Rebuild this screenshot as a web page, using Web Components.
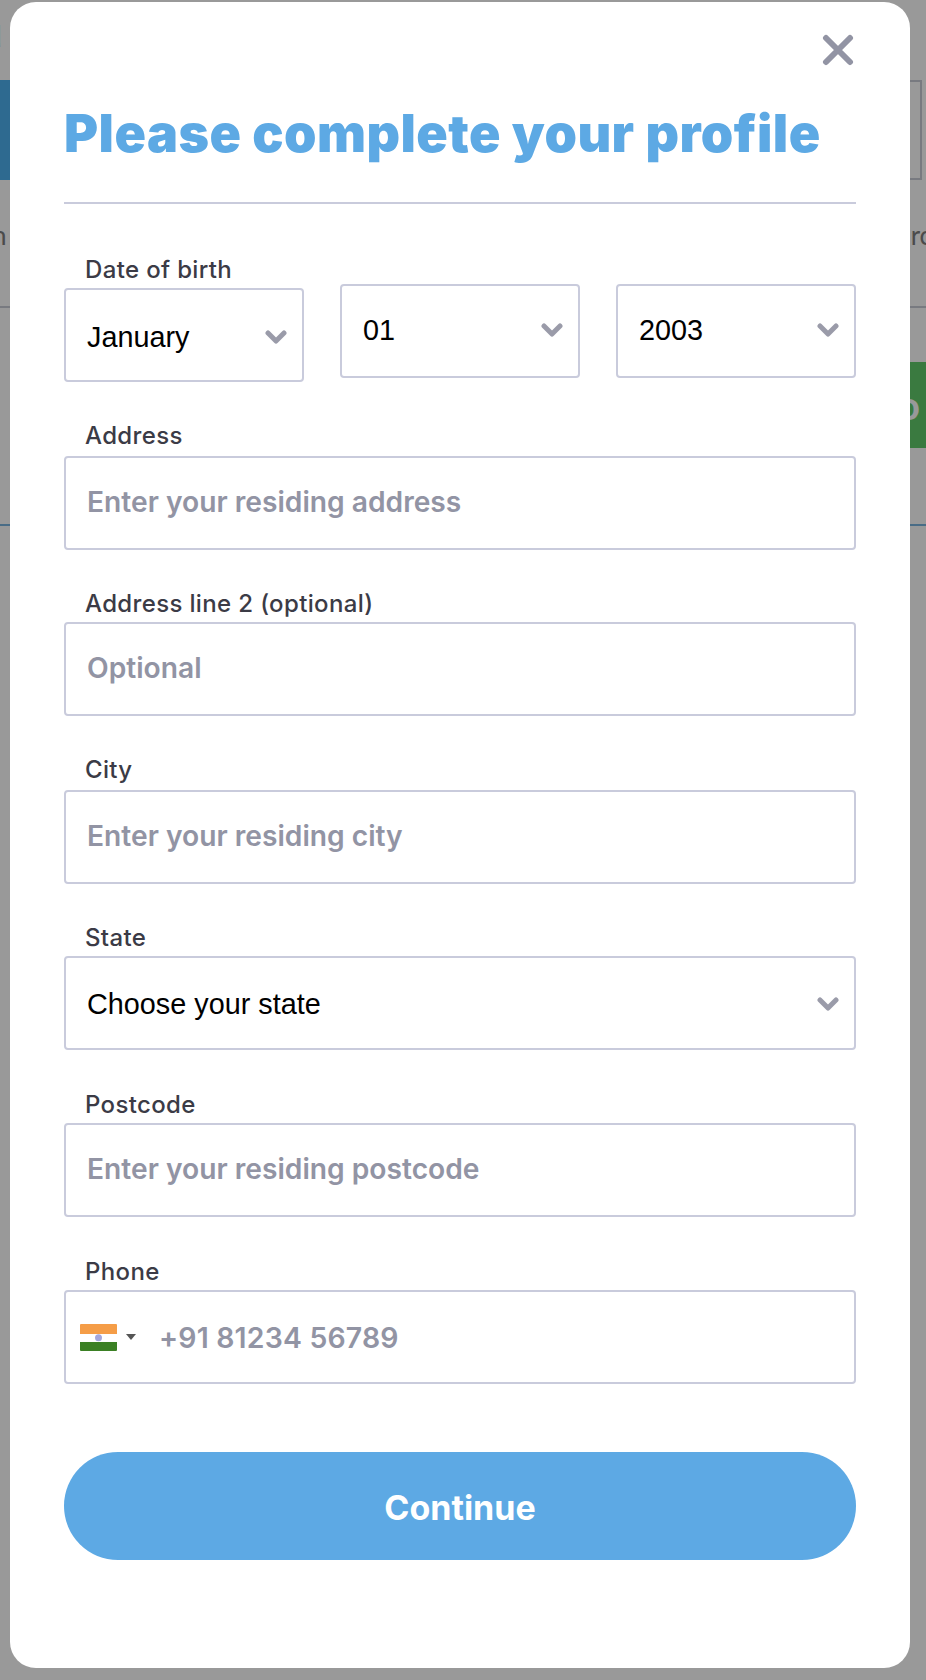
<!DOCTYPE html>
<html lang="en">
<head>
<meta charset="utf-8">
<title>Complete your profile</title>
<style>
  html, body { margin: 0; padding: 0; background: #fff; }
  body { font-family: "Inter", "Liberation Sans", sans-serif; height: 1680px; overflow: hidden; }
</style>
</head>
<body>
<behind-page></behind-page>
<profile-modal heading="Please complete your profile">
  <date-row>
    <form-field slot="month" label="Date of birth"><select-box value="January" style="padding-top:4px"></select-box></form-field>
    <select-box slot="day" value="01" style="padding-bottom:2px"></select-box>
    <select-box slot="year" value="2003" style="padding-bottom:2px"></select-box>
  </date-row>
  <form-field label="Address" style="--gap:5px;margin-top:39px"><text-box placeholder="Enter your residing address"></text-box></form-field>
  <form-field label="Address line 2 (optional)" style="margin-top:39px"><text-box placeholder="Optional"></text-box></form-field>
  <form-field label="City" style="--gap:5px;margin-top:39px"><text-box placeholder="Enter your residing city"></text-box></form-field>
  <form-field label="State" style="margin-top:39px"><select-box value="Choose your state" style="padding-top:2px"></select-box></form-field>
  <form-field label="Postcode" style="margin-top:40px"><text-box placeholder="Enter your residing postcode"></text-box></form-field>
  <form-field label="Phone" style="margin-top:40px"><phone-box placeholder="+91 81234 56789"></phone-box></form-field>
  <continue-button>Continue</continue-button>
</profile-modal>

<script>
// page behind the overlay, only slivers of it show at the edges
class BehindPage extends HTMLElement {
  constructor() {
    super();
    this.attachShadow({ mode: "open" }).innerHTML = `
      <style>
        :host { display: block; height: 1680px; overflow: hidden; font-family: "Lato", sans-serif; color: #7d7d7d; }
        .top { height: 80px; font: 700 40px/66px "Liberation Sans", sans-serif; color: #333; margin-left: -22px; }
        .hero { display: flex; justify-content: space-between; height: 100px; }
        .hero .blue { width: 400px; margin-left: -390px; background: #4db1f0; }
        .hero .box { width: 400px; margin-right: 4px; border: 2px solid #c8ccd6; box-sizing: border-box; }
        .sub { display: flex; justify-content: space-between; margin-top: 38px; font-size: 26px; line-height: 34px; white-space: nowrap; }
        .sub span:first-child { margin-left: -8px; }
        .sub span:last-child { margin-right: -6px; }
        .rule { margin-top: 54px; height: 2px; background: #c8ccd6; }
        .cta { display: flex; justify-content: flex-end; margin-top: 54px; }
        .cta div { width: 46px; height: 86px; background: #62cb6b; color: #fff; font: 700 40px/86px "Lato", sans-serif; overflow: hidden; white-space: nowrap; text-indent: -6px; }
        .rule2 { margin-top: 76px; height: 2px; background: #7ab5e0; }
      </style>
      <div class="top">u</div>
      <div class="hero"><div class="blue"></div><div class="box"></div></div>
      <div class="sub"><span>n</span><span>rc</span></div>
      <div class="rule"></div>
      <div class="cta"><div>oo</div></div>
      <div class="rule2"></div>`;
  }
}

class ProfileModal extends HTMLElement {
  constructor() {
    super();
    this.attachShadow({ mode: "open" }).innerHTML = `
      <style>
        :host { display: block; position: fixed; inset: 0; background: rgba(0, 0, 0, .4); }
        .card { position: relative; box-sizing: border-box; margin: 2px 16px 0 10px; height: 1666px; padding: 102px 54px 0; background: #fff; border-radius: 26px; }
        .close { position: absolute; top: 32px; right: 56px; width: 32px; height: 32px; }
        h1 { margin: 0; font: 900 52px/60px "Inter", sans-serif; letter-spacing: .45px; color: #5da9e4; white-space: nowrap; }
        hr { margin: 38px 0 0; border: 0; height: 2px; background: #c9cbdc; }
      </style>
      <div class="card">
        <svg class="close" viewBox="0 0 32 32"><path d="M4 4 L28 28 M28 4 L4 28" stroke="#9294a4" stroke-width="6" stroke-linecap="round" fill="none"/></svg>
        <h1></h1>
        <hr>
        <slot></slot>
      </div>`;
  }
  connectedCallback() {
    this.shadowRoot.querySelector("h1").textContent = this.getAttribute("heading");
  }
}

class DateRow extends HTMLElement {
  constructor() {
    super();
    this.attachShadow({ mode: "open" }).innerHTML = `
      <style>
        :host { display: grid; grid-template-columns: repeat(3, 240px); justify-content: space-between; align-items: end; margin-top: 51px; }
        .raised { padding-bottom: 4px; }
      </style>
      <div><slot name="month"></slot></div>
      <div class="raised"><slot name="day"></slot></div>
      <div class="raised"><slot name="year"></slot></div>`;
  }
}

class FormField extends HTMLElement {
  constructor() {
    super();
    this.attachShadow({ mode: "open" }).innerHTML = `
      <style>
        :host { display: block; }
        label { display: block; padding-left: 21px; height: 30px; margin-bottom: var(--gap, 3px); font: 500 24px/30px "Inter", sans-serif; letter-spacing: .35px; color: #3b3b46; }
      </style>
      <label></label>
      <slot></slot>`;
  }
  connectedCallback() {
    this.shadowRoot.querySelector("label").textContent = this.getAttribute("label");
  }
}

const boxStyle = `
  :host { display: flex; align-items: center; box-sizing: border-box; height: 94px; padding: 0 21px; background: #fff; border: 2px solid #c9cbdc; border-radius: 4px; white-space: nowrap; }
`;

class SelectBox extends HTMLElement {
  constructor() {
    super();
    this.attachShadow({ mode: "open" }).innerHTML = `
      <style>
        ${boxStyle}
        :host { justify-content: space-between; padding-right: 15px; font: 400 28.8px "Liberation Sans", sans-serif; color: #000; }
        svg { width: 22px; height: 14px; }
      </style>
      <span></span>
      <svg viewBox="0 0 22 14"><path d="M3 3 L11 11 L19 3" stroke="#9a9ba9" stroke-width="5" stroke-linecap="round" stroke-linejoin="round" fill="none"/></svg>`;
  }
  connectedCallback() {
    this.shadowRoot.querySelector("span").textContent = this.getAttribute("value");
  }
}

class TextBox extends HTMLElement {
  constructor() {
    super();
    this.attachShadow({ mode: "open" }).innerHTML = `
      <style>
        ${boxStyle}
        :host { padding-bottom: 2px; font: 600 28.2px "Inter", sans-serif; color: #9294a4; }
      </style>
      <span></span>`;
  }
  connectedCallback() {
    this.shadowRoot.querySelector("span").textContent = this.getAttribute("placeholder");
  }
}

class PhoneBox extends HTMLElement {
  constructor() {
    super();
    this.attachShadow({ mode: "open" }).innerHTML = `
      <style>
        ${boxStyle}
        :host { padding-left: 14px; font: 600 28.4px "Inter", sans-serif; letter-spacing: .2px; color: #9294a4; }
        .flag { width: 37px; height: 27px; display: block; border-radius: 1px; }
        .caret { width: 0; height: 0; margin: 0 23px 0 9px; border: 5px solid transparent; border-top: 6px solid #555; border-bottom: 0; }
      </style>
      <svg class="flag" viewBox="0 0 37 27">
        <rect width="37" height="10" fill="#f59d47"/>
        <rect y="10" width="37" height="8" fill="#fff"/>
        <rect y="18" width="37" height="9" fill="#3b8024"/>
        <circle cx="18.5" cy="13.8" r="3.5" fill="#a4a6dc"/>
      </svg>
      <div class="caret"></div>
      <span></span>`;
  }
  connectedCallback() {
    this.shadowRoot.querySelector("span").textContent = this.getAttribute("placeholder");
  }
}

class ContinueButton extends HTMLElement {
  constructor() {
    super();
    this.attachShadow({ mode: "open" }).innerHTML = `
      <style>
        :host { display: flex; align-items: center; justify-content: center; box-sizing: border-box; height: 108px; padding-top: 2px; margin-top: 68px; border-radius: 54px; background: #5da9e4; color: #fff; font: 700 34px "Inter", sans-serif; }
      </style>
      <slot></slot>`;
  }
}

customElements.define("behind-page", BehindPage);
customElements.define("profile-modal", ProfileModal);
customElements.define("date-row", DateRow);
customElements.define("form-field", FormField);
customElements.define("select-box", SelectBox);
customElements.define("text-box", TextBox);
customElements.define("phone-box", PhoneBox);
customElements.define("continue-button", ContinueButton);
</script>
</body>
</html>
